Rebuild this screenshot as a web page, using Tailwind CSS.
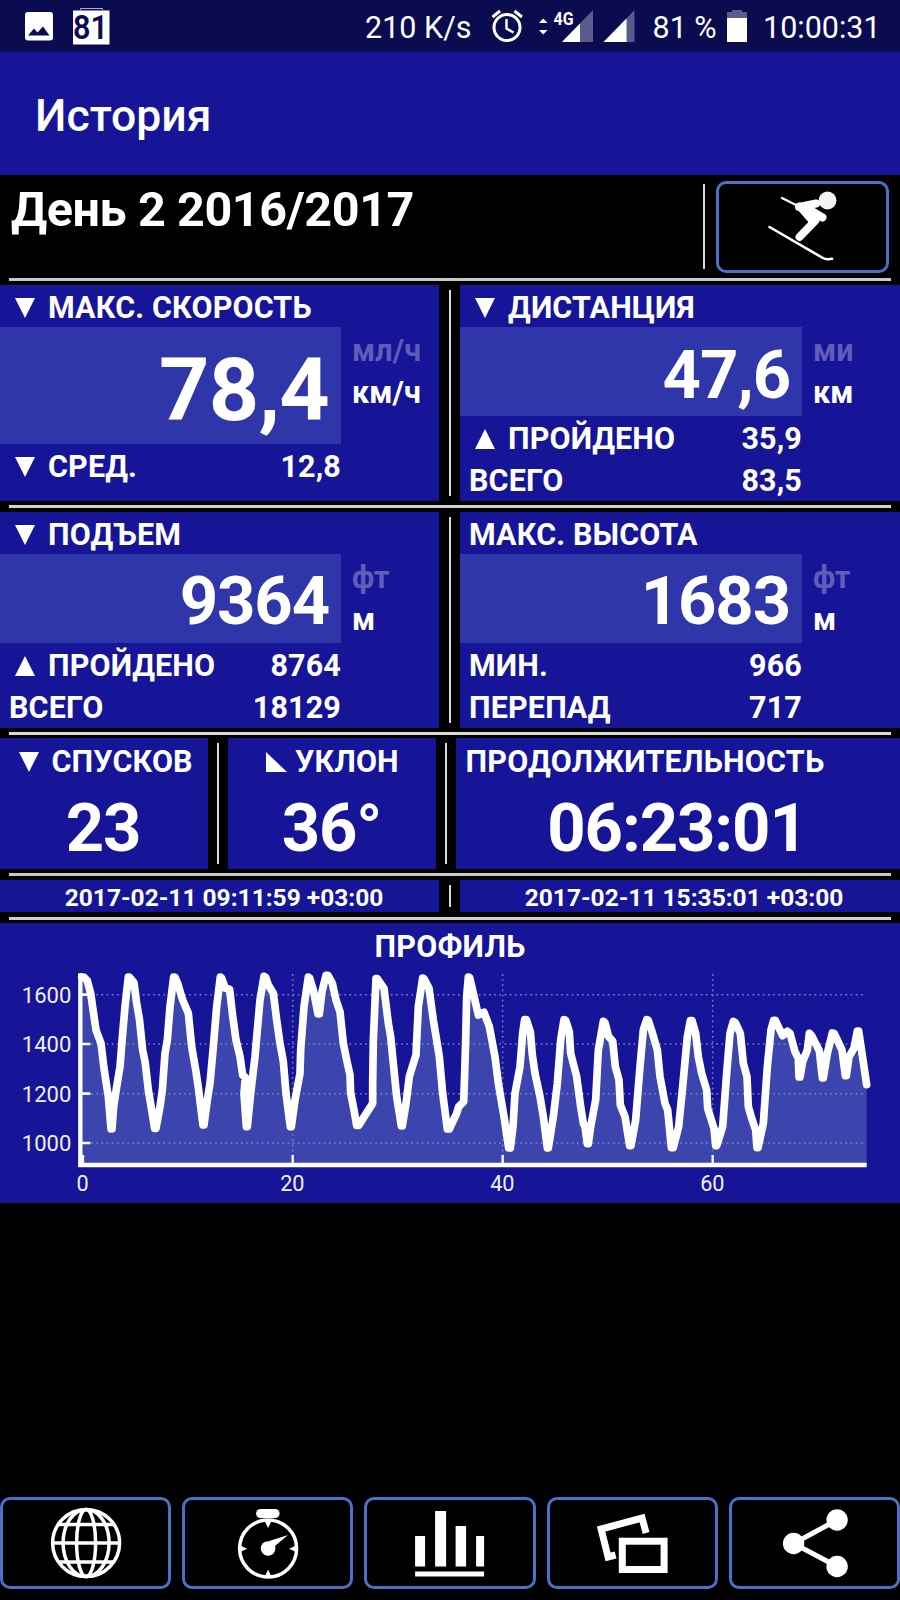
<!DOCTYPE html>
<html lang="ru">

<head>
  <meta charset="UTF-8">
  <meta name="viewport" content="width=device-width, initial-scale=1.0">
  <title>История</title>
  <script src="https://cdn.jsdelivr.net/npm/@tailwindcss/browser@4"></script>
</head>

<body class="bg-black">
  <div class="flex flex-col w-[900px] h-[1600px] overflow-hidden bg-black text-white font-['Roboto',sans-serif]">
    <!-- status bar -->
    <div class="flex items-center h-[52px] shrink-0 bg-[#0b0b50] text-[30.5px] leading-none">
      <svg class="ml-[24px] w-[88px] h-[52px]" viewBox="24 0 88 52">
        <rect x="25" y="12" width="28" height="28.500" rx="3" fill="#fff" />
        <path d="M28 35.500 L34 28.500 L37.500 32.500 L43 26.500 L49.500 35.500Z" fill="#0b0b50" />
        <path d="M80.500 10V8.500H102.500V10" fill="none" stroke="#aaaacc" />
        <rect x="73" y="10.500" width="36.500" height="34" fill="#fff" />
        <text x="73" y="39" font-size="33.500" font-weight="600" fill="#0b0b50" textLength="35" lengthAdjust="spacingAndGlyphs">81</text>
      </svg>
      <p class="ml-[253px] pt-[4px] w-[107px] whitespace-nowrap">210 K/s</p>
      <svg class="ml-[19px] w-[144px] h-[52px]" viewBox="491 0 144 52">
        <g fill="none" stroke="#fff">
          <circle cx="507" cy="27.500" r="13" stroke-width="3" />
          <path d="M506.500 19 V28.500 L513.500 32.500" stroke-width="2.400" />
          <path d="M492.500 17 L500 11 M514.500 11 L522 17" stroke-width="3" />
        </g>
        <path d="M539 23 L543.200 18.500 L547.500 23Z M539 30 L543.200 34.500 L547.500 30Z" fill="#fff" />
        <path d="M593 10 V42 H562Z M634.500 10 V42 H603.500Z" fill="#5b5a8c" />
        <path d="M580 23.500 V42 H562Z M626.500 18.500 V42 H603.500Z" fill="#fff" />
        <text x="553.500" y="25" font-size="19" font-weight="700" fill="#fff" textLength="20" lengthAdjust="spacingAndGlyphs">4G</text>
      </svg>
      <p class="ml-[17.500px] pt-[4px] w-[65.500px] whitespace-nowrap">81 %</p>
      <svg class="ml-[8px] w-[22px] h-[52px]" viewBox="726 0 22 52">
        <path d="M727 12 H732 V10 H742 V12 H747 V20 H727Z" fill="#5b5a8c" />
        <rect x="727" y="18" width="20" height="24" fill="#fff" />
      </svg>
      <p class="ml-[15px] pt-[4px] whitespace-nowrap">10:00:31</p>
    </div>

    <header class="flex items-center h-[123px] shrink-0 pl-[35px] pt-[5px] bg-[#161497]">
      <h1 class="text-[44.5px] leading-none font-medium">История</h1>
    </header>

    <!-- title and activity type -->
    <div class="flex h-[103px] shrink-0">
      <h2 class="flex-1 pl-[11px] pt-[9px] text-[48.5px] leading-[51px] tracking-[-0.4px] font-bold whitespace-nowrap">День 2 2016/2017</h2>
      <div class="mt-[9px] w-[2.500px] h-[85px] bg-[#d9d9d9]"></div>
      <button class="flex items-center justify-center mt-[6px] ml-[11px] mr-[11px] w-[173px] h-[92px] border-3 border-[#4a70c8] rounded-[10px]">
        <svg class="w-[167px] h-[86px]" viewBox="719 184 167 86" fill="none" stroke="#fff" stroke-linecap="round" stroke-linejoin="round">
          <circle cx="827.500" cy="200.500" r="9" fill="#f4f4f4" stroke="none" />
          <path d="M782 198 L800 207" stroke-width="2.200" />
          <path d="M816 203.500 L799 207" stroke-width="8" />
          <path d="M799 206 L812 221 L816 220 L811 209Z" fill="#fff" stroke-width="7" />
          <path d="M810 210 L822.500 217.500" stroke-width="8" />
          <path d="M814.500 221.500 L799.500 237" stroke-width="8" />
          <path d="M769.500 227 L822 257.500 C826 260 829 259.500 832 258.800" stroke-width="2.600" />
        </svg>
      </button>
    </div>
    <div class="mx-[9px] mb-[4px] h-[3px] shrink-0 bg-[#c8c8c8]"></div>

    <!-- speed / distance -->
    <div class="flex h-[216px] shrink-0 text-[30.5px] leading-none tracking-[0.15px] font-bold whitespace-nowrap">
      <section class="flex w-[439px] bg-[#161497]">
        <div class="w-[341px]">
          <div class="flex items-center h-[42px] pt-[4px] pl-[15px]">
            <svg class="w-[20px] h-[20px] mr-[13px]" viewBox="0 0 20 20"><path d="M0 0H20L10 20Z" fill="#fff" /></svg>
            <h3>МАКС. СКОРОСТЬ</h3>
          </div>
          <div class="flex items-center justify-end h-[117px] pr-[12px] pt-[9px] bg-[#2f36a9] text-[88px] tracking-[-0.8px]">78,4</div>
          <div class="flex items-center h-[42px] pt-[4px] pl-[15px]">
            <svg class="w-[20px] h-[20px] mr-[13px]" viewBox="0 0 20 20"><path d="M0 0H20L10 20Z" fill="#fff" /></svg>
            <p>СРЕД.</p>
            <p class="ml-auto">12,8</p>
          </div>
        </div>
        <div class="pl-[11px] pt-[43px]">
          <p class="flex items-center h-[42px] pt-[4px] text-[#5f5cba]">мл/ч</p>
          <p class="flex items-center h-[42px] pt-[4px]">км/ч</p>
        </div>
      </section>
      <div class="ml-[9.500px] mr-[9px] my-[5px] w-[2.500px] bg-[#d9d9d9]"></div>
      <section class="flex flex-1 bg-[#161497]">
        <div class="w-[342px]">
          <div class="flex items-center h-[42px] pt-[4px] pl-[15px]">
            <svg class="w-[20px] h-[20px] mr-[13px]" viewBox="0 0 20 20"><path d="M0 0H20L10 20Z" fill="#fff" /></svg>
            <h3>ДИСТАНЦИЯ</h3>
          </div>
          <div class="flex items-center justify-end h-[89px] pr-[12px] pt-[7px] bg-[#2f36a9] text-[67px] tracking-[-1.1px]">47,6</div>
          <div class="flex items-center h-[42px] pt-[4px] pl-[15px]">
            <svg class="w-[20px] h-[20px] mr-[13px]" viewBox="0 0 20 20"><path d="M0 20H20L10 0Z" fill="#fff" /></svg>
            <p>ПРОЙДЕНО</p>
            <p class="ml-auto">35,9</p>
          </div>
          <div class="flex items-center justify-between h-[42px] pt-[5px] pl-[9px]">
            <p>ВСЕГО</p>
            <p>83,5</p>
          </div>
        </div>
        <div class="pl-[11px] pt-[43px]">
          <p class="flex items-center h-[42px] pt-[4px] text-[#5f5cba]">ми</p>
          <p class="flex items-center h-[42px] pt-[4px]">км</p>
        </div>
      </section>
    </div>
    <div class="mx-[9px] my-[4px] h-[3px] shrink-0 bg-[#d4d0d4]"></div>

    <!-- ascent / altitude -->
    <div class="flex h-[216px] shrink-0 text-[30.5px] leading-none tracking-[0.15px] font-bold whitespace-nowrap">
      <section class="flex w-[439px] bg-[#161497]">
        <div class="w-[341px]">
          <div class="flex items-center h-[42px] pt-[4px] pl-[15px]">
            <svg class="w-[20px] h-[20px] mr-[13px]" viewBox="0 0 20 20"><path d="M0 0H20L10 20Z" fill="#fff" /></svg>
            <h3>ПОДЪЕМ</h3>
          </div>
          <div class="flex items-center justify-end h-[89px] pr-[12px] pt-[6px] bg-[#2f36a9] text-[67px] tracking-[-1.1px]">9364</div>
          <div class="flex items-center h-[42px] pt-[4px] pl-[15px]">
            <svg class="w-[20px] h-[20px] mr-[13px]" viewBox="0 0 20 20"><path d="M0 20H20L10 0Z" fill="#fff" /></svg>
            <p>ПРОЙДЕНО</p>
            <p class="ml-auto">8764</p>
          </div>
          <div class="flex items-center justify-between h-[42px] pt-[5px] pl-[9px]">
            <p>ВСЕГО</p>
            <p>18129</p>
          </div>
        </div>
        <div class="pl-[11px] pt-[43px]">
          <p class="flex items-center h-[42px] pt-[4px] text-[#5f5cba]">фт</p>
          <p class="flex items-center h-[42px] pt-[4px]">м</p>
        </div>
      </section>
      <div class="ml-[9.500px] mr-[9px] my-[5px] w-[2.500px] bg-[#d9d9d9]"></div>
      <section class="flex flex-1 bg-[#161497]">
        <div class="w-[342px]">
          <h3 class="flex items-center h-[42px] pt-[4px] pl-[9px]">МАКС. ВЫСОТА</h3>
          <div class="flex items-center justify-end h-[89px] pr-[12px] pt-[6px] bg-[#2f36a9] text-[67px] tracking-[-1.1px]">1683</div>
          <div class="flex items-center justify-between h-[42px] pt-[4px] pl-[9px]">
            <p>МИН.</p>
            <p>966</p>
          </div>
          <div class="flex items-center justify-between h-[42px] pt-[5px] pl-[9px]">
            <p>ПЕРЕПАД</p>
            <p>717</p>
          </div>
        </div>
        <div class="pl-[11px] pt-[43px]">
          <p class="flex items-center h-[42px] pt-[4px] text-[#5f5cba]">фт</p>
          <p class="flex items-center h-[42px] pt-[4px]">м</p>
        </div>
      </section>
    </div>
    <div class="mx-[9px] mt-[4px] mb-[3px] h-[3px] shrink-0 bg-[#dcdcd4]"></div>

    <!-- runs / slope / duration -->
    <div class="flex h-[131px] shrink-0 text-[30.5px] leading-none tracking-[0.15px] font-bold whitespace-nowrap">
      <section class="w-[208px] bg-[#161497]">
        <div class="flex items-center h-[42px] pt-[6px] pl-[19px]">
          <svg class="w-[20px] h-[20px] mr-[12.500px]" viewBox="0 0 20 20"><path d="M0 0H20L10 20Z" fill="#fff" /></svg>
          <h3>СПУСКОВ</h3>
        </div>
        <p class="flex items-center justify-center h-[89px] pt-[7px] pr-[2px] text-[67px] tracking-[-1.1px]">23</p>
      </section>
      <div class="mx-[9px] my-[5px] w-[2px] bg-[#d9d9d9]"></div>
      <section class="w-[208px] bg-[#161497]">
        <div class="flex items-center h-[42px] pt-[6px] pl-[38px]">
          <svg class="w-[21px] h-[20px] mr-[8px]" viewBox="0 0 21 20"><path d="M0 0V20H21Z" fill="#fff" /></svg>
          <h3>УКЛОН</h3>
        </div>
        <p class="flex items-center justify-center h-[89px] pt-[7px] pr-[1px] text-[67px] tracking-[-1.1px]">36°</p>
      </section>
      <div class="mx-[9px] my-[5px] w-[2px] bg-[#d9d9d9]"></div>
      <section class="flex-1 bg-[#161497]">
        <h3 class="flex items-center h-[42px] pt-[6px] pl-[9.500px] tracking-[0.25px]">ПРОДОЛЖИТЕЛЬНОСТЬ</h3>
        <p class="flex items-center justify-center h-[89px] pt-[7px] pr-[2px] text-[67px] tracking-[-1.1px]">06:23:01</p>
      </section>
    </div>
    <div class="mx-[9px] my-[4px] h-[3px] shrink-0 bg-[#c8c8c8]"></div>

    <!-- start / end time -->
    <div class="flex h-[32px] shrink-0 text-[24.5px] leading-none font-bold whitespace-nowrap">
      <p class="flex items-center justify-center w-[439px] pl-[9px] pt-[4px] bg-[#161497]">2017-02-11 09:11:59 +03:00</p>
      <div class="ml-[9.500px] mr-[9px] my-[5px] w-[2.500px] bg-[#d9d9d9]"></div>
      <p class="flex items-center justify-center flex-1 pl-[8px] pt-[4px] bg-[#161497]">2017-02-11 15:35:01 +03:00</p>
    </div>
    <div class="mx-[9px] mt-[5px] mb-[3px] h-[3px] shrink-0 bg-[#d0d0d4]"></div>

    <!-- altitude profile -->
    <section class="h-[280px] shrink-0 bg-[#161497]">
      <h3 class="flex items-center justify-center h-[42px] pt-[6px] text-[30.5px] leading-none tracking-[0.25px] font-bold">ПРОФИЛЬ</h3>
      <!-- 3 units per pixel -->
      <svg class="w-[900px] h-[238px]" viewBox="0 75 2700 714">
        <path fill="#3b45ad" d="M245 675 V108 L262 120 272 160 288 270 303 310 312 385 325 470 333 570 340 500 360 400 375 200 386 108 402 125 415 210 428 330 440 400 455 510 466 567 480 500 492 400 510 200 522 108 533 125 548 180 565 220 575 320 592 420 603 500 610 558 625 470 640 360 650 200 661 108 675 145 692 148 697 220 715 330 728 405 734 462 740 560 748 480 765 350 780 180 793 105 805 130 822 160 835 280 850 370 858 460 872 562 885 480 900 400 905 330 912 200 926 108 940 150 955 222 965 150 980 103 995 125 1018 215 1030 310 1048 400 1052 470 1072 558 1118 490 1120 300 1128 113 1150 145 1165 250 1180 360 1190 470 1205 560 1220 470 1235 390 1248 345 1255 200 1269 112 1285 150 1300 240 1318 350 1328 460 1345 568 1352 560 1370 520 1390 490 1397 300 1400 170 1406 108 1420 160 1435 225 1452 217 1468 260 1485 350 1500 470 1512 530 1528 625 1538 560 1545 460 1560 380 1568 280 1576 235 1592 270 1600 360 1615 450 1630 540 1643 625 1660 530 1672 430 1682 300 1693 236 1707 270 1712 340 1730 410 1747 540 1763 613 1782 510 1795 330 1811 240 1825 290 1840 305 1850 400 1862 500 1880 550 1891 620 1907 540 1920 380 1930 270 1941 235 1953 270 1970 330 1982 430 1995 490 2005 550 2016 625 2035 560 2048 440 2062 290 2073 238 2087 280 2100 370 2118 450 2123 510 2140 560 2149 618 2168 550 2180 400 2190 280 2202 240 2220 280 2230 370 2243 500 2265 570 2272 625 2290 540 2302 380 2313 270 2323 237 2348 290 2365 272 2385 330 2398 412 2410 360 2420 330 2428 277 2455 330 2468 415 2480 340 2499 276 2525 330 2537 408 2547 350 2562 325 2573 270 2600 435 V675Z" />
        <g fill="none" stroke="#8a8ad0" stroke-width="4.500" stroke-dasharray="5 10.500" opacity=".9">
          <path d="M258 164H2595 M258 312H2595 M258 461H2595 M258 609H2595" />
          <path d="M878 102V660 M1508 102V660 M2138 102V660" />
        </g>
        <g fill="none" stroke="#fff">
          <path d="M241 100V681" stroke-width="13" />
          <path d="M235 675H2600" stroke-width="14" />
          <path d="M245 164H271 M245 312H271 M245 461H271 M245 609H271" stroke-width="8" />
          <path d="M249 645V670 M878 645V670 M1508 645V670 M2138 645V670" stroke-width="7" />
          <path stroke-width="23" stroke-linecap="round" stroke-linejoin="round" d="M245 111 L252 112 262 122 272 160 280 215 288 270 303 310 312 385 325 470 333 567 336 567 341 500 350 440 360 380 368 280 375 200 385 111 389 112 402 128 410 190 418 235 428 330 436 370 445 450 455 510 464 565 468 565 480 500 487 450 495 340 502 300 510 200 521 111 525 112 533 130 548 180 565 220 575 320 588 395 596 450 602 500 609 555 612 555 622 480 630 430 640 320 650 200 661 111 665 115 676 145 689 148 697 220 708 300 720 350 728 405 736 412 732 462 739 560 742 560 752 460 765 350 780 180 792 109 797 112 805 135 820 160 830 240 840 310 850 365 858 460 871 560 874 560 885 480 900 400 902 330 912 200 925 111 929 114 940 150 954 222 958 222 966 155 978 106 984 106 997 130 1008 180 1020 215 1030 310 1040 360 1050 405 1052 460 1062 510 1070 556 1076 556 1118 490 1118 430 1120 300 1128 116 1132 116 1152 145 1165 250 1172 290 1180 370 1190 470 1204 558 1207 558 1218 490 1228 410 1240 370 1248 345 1255 200 1268 114 1272 116 1287 145 1300 240 1318 350 1328 460 1342 567 1348 567 1370 520 1376 500 1391 485 1394 400 1397 300 1400 170 1405 111 1409 113 1420 160 1435 225 1452 217 1468 260 1485 350 1495 430 1512 530 1526 624 1531 624 1539 560 1545 460 1560 380 1568 280 1574 239 1579 239 1591 275 1597 345 1605 400 1620 470 1630 530 1642 624 1645 624 1660 530 1672 430 1682 300 1692 239 1697 241 1708 275 1712 340 1730 410 1742 500 1750 550 1755 560 1762 611 1765 611 1772 560 1787 480 1795 330 1810 244 1815 248 1826 290 1838 303 1846 380 1857 420 1861 495 1875 530 1889 617 1893 617 1907 540 1920 380 1930 270 1940 239 1945 241 1956 275 1972 330 1980 410 1995 490 2003 510 2008 560 2014 623 2020 623 2036 560 2048 440 2062 290 2071 242 2076 242 2087 280 2095 350 2105 400 2120 450 2123 505 2142 565 2147 617 2150 617 2168 560 2180 400 2190 280 2200 244 2206 248 2221 280 2230 370 2241 410 2245 500 2255 535 2267 570 2271 623 2274 623 2290 550 2302 380 2313 270 2321 241 2326 241 2348 287 2362 274 2370 280 2385 335 2395 355 2397 411 2400 411 2408 365 2422 330 2428 280 2435 287 2458 332 2467 414 2470 414 2482 340 2497 279 2503 281 2526 330 2536 407 2539 407 2547 350 2562 325 2572 273 2576 273 2600 434" />
        </g>
        <g fill="#f0f0fa">
          <g font-size="66" text-anchor="end">
            <text x="214" y="188">1600</text>
            <text x="214" y="337">1400</text>
            <text x="214" y="486">1200</text>
            <text x="214" y="634">1000</text>
          </g>
          <g font-size="65" text-anchor="middle">
            <text x="248" y="752">0</text>
            <text x="877" y="752">20</text>
            <text x="1507" y="752">40</text>
            <text x="2137" y="752">60</text>
          </g>
        </g>
      </svg>
    </section>

    <!-- bottom buttons -->
    <nav class="grid grid-cols-5 gap-[11px] mt-auto mb-[11px] h-[92px] shrink-0">
      <button class="border-3 border-[#4a70c8] rounded-[10px]">
        <svg class="w-full h-[86px]" viewBox="3 1500 165 86" fill="none" stroke="#fff" stroke-width="3.500">
          <circle cx="86" cy="1543" r="33.500" />
          <ellipse cx="86" cy="1543" rx="23" ry="33.500" />
          <ellipse cx="86" cy="1543" rx="9.500" ry="33.500" />
          <path d="M52 1543H120 M58 1524.500H114 M58 1562H114" />
        </svg>
      </button>
      <button class="border-3 border-[#4a70c8] rounded-[10px]">
        <svg class="w-full h-[86px]" viewBox="185 1500 165 86" fill="#fff">
          <rect x="256" y="1509" width="23.500" height="9" rx="4.500" />
          <circle cx="268" cy="1548.500" r="28.500" fill="none" stroke="#fff" stroke-width="3.500" />
          <circle cx="268" cy="1548.500" r="7.300" />
          <path d="M269 1541 L288 1535 L273 1547.500Z" />
          <path d="M264.500 1521H271.500L268 1528Z M264.500 1577H271.500L268 1569.500Z M240 1545.500V1552L247 1548.800Z M296 1545.500V1552L289 1548.800Z" />
        </svg>
      </button>
      <button class="border-3 border-[#4a70c8] rounded-[10px]">
        <svg class="w-full h-[86px]" viewBox="367 1500 165 86" fill="#fff">
          <path d="M415 1536H425V1566.500H415Z M435 1511H446V1566.500H435Z M455.500 1526H466V1566.500H455.500Z M476 1536H484V1566.500H476Z M415 1571.500H484V1576.500H415Z" />
        </svg>
      </button>
      <button class="border-3 border-[#4a70c8] rounded-[10px]">
        <svg class="w-full h-[86px]" viewBox="549.500 1500 165 86" fill="none" stroke="#fff">
          <path d="M615 1555 L607.500 1557 L600.500 1529 L641.500 1518 L645.500 1533" stroke-width="7" />
          <rect x="621.700" y="1541.200" width="41.800" height="28.300" stroke-width="7" />
        </svg>
      </button>
      <button class="border-3 border-[#4a70c8] rounded-[10px]">
        <svg class="w-full h-[86px]" viewBox="731.500 1500 165 86" fill="#fff">
          <path d="M836.500 1520 L793 1543.500 L836.500 1566.500" fill="none" stroke="#fff" stroke-width="5" />
          <circle cx="836.500" cy="1520" r="10.700" />
          <circle cx="793" cy="1543.500" r="10.700" />
          <circle cx="836.500" cy="1566.500" r="10.700" />
        </svg>
      </button>
    </nav>
  </div>
</body>

</html>
